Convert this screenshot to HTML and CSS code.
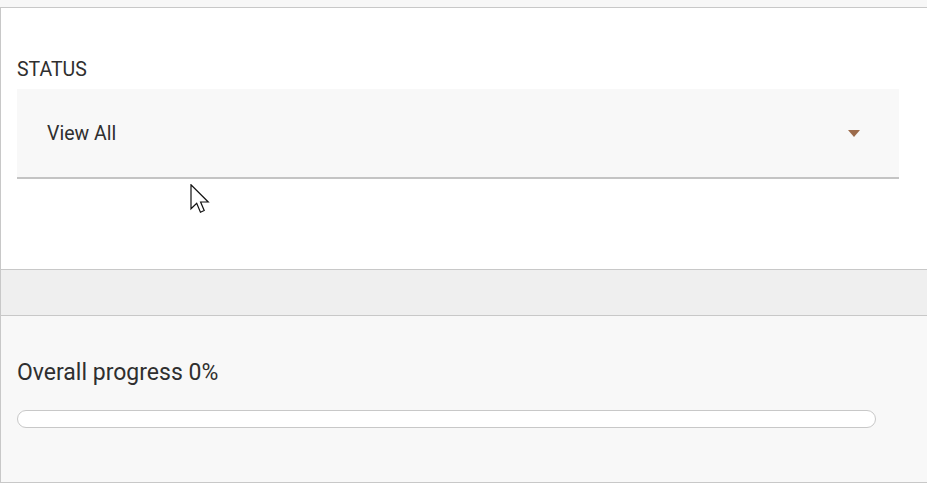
FILE: index.html
```html
<!DOCTYPE html>
<html>
<head>
<meta charset="utf-8">
<link rel="stylesheet" href="styles.css">
</head>
<body>
<div class="topstrip"></div>
<div class="page">
  <section class="filters">
    <label class="field-label">STATUS</label>
    <div class="select">
      <span class="select-value">View All</span>
      <span class="caret"></span>
    </div>
  </section>
  <div class="band"></div>
  <section class="progress-panel">
    <h2 class="progress-title">Overall progress 0%</h2>
    <div class="progress-track"><div class="progress-fill" style="width:0%"></div></div>
  </section>
</div>
<svg class="cursor" width="20" height="30" viewBox="0 0 13 20" xmlns="http://www.w3.org/2000/svg">
  <path d="M0.5 0.5 L0.5 16.5 L4.3 12.9 L6.8 18.8 L9.3 17.7 L6.9 12 L12 12 Z" fill="#fff" stroke="#111" stroke-width="0.8" stroke-linejoin="miter"/>
</svg>
</body>
</html>
```

FILE: styles.css
```css
html, body {
  margin: 0;
  padding: 0;
  background: #ffffff;
  font-family: Roboto, "Noto Sans", Arial, sans-serif;
  color: #2f2f2f;
}

.topstrip {
  height: 7px;
  background: #f7f7f7;
  border-bottom: 1px solid #c8c8c8;
}

.page {
  border-left: 1px solid #c8c8c8;
  display: flex;
  flex-direction: column;
}

.filters {
  padding: 50px 28px 90px 16px;
  display: flex;
  flex-direction: column;
}

.field-label {
  font-size: 19.5px;
  line-height: 24px;
  height: 24px;
  margin-bottom: 7px;
  color: #2f2f2f;
}

.select {
  height: 88px;
  background: #f8f8f8;
  border-bottom: 2px solid #c4c4c4;
  display: flex;
  align-items: center;
  justify-content: space-between;
  padding: 0 39px 0 30px;
}

.select-value {
  font-size: 19.5px;
  color: #2f2f2f;
}

.caret {
  width: 0;
  height: 0;
  border-left: 6px solid transparent;
  border-right: 6px solid transparent;
  border-top: 7px solid #9c6b4b;
}

.band {
  height: 45px;
  background: #efefef;
  border-top: 1px solid #c8c8c8;
  border-bottom: 1px solid #c8c8c8;
}

.progress-panel {
  height: 167px;
  background: #f8f8f8;
  border-bottom: 1px solid #c8c8c8;
  padding: 42px 51px 0 16px;
  box-sizing: border-box;
  display: flex;
  flex-direction: column;
}

.progress-title {
  margin: 0;
  font-weight: 400;
  font-size: 23px;
  line-height: 30px;
  color: #2f2f2f;
}

.progress-track {
  margin-top: 22px;
  height: 16px;
  background: #ffffff;
  border: 1px solid #c8c8c8;
  border-radius: 9px;
  overflow: hidden;
}

.progress-fill {
  height: 100%;
  background: #9c6b4b;
}

.cursor {
  position: absolute;
  left: 190px;
  top: 184px;
}
```
